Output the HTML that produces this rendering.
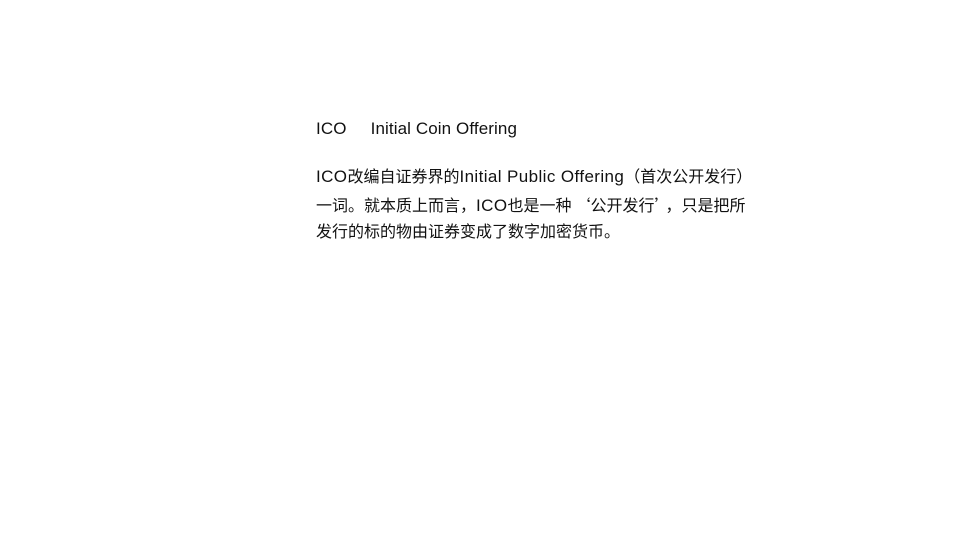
<!DOCTYPE html>
<html><head><meta charset="utf-8"><style>
html,body{margin:0;padding:0;background:#fff;width:960px;height:540px;overflow:hidden}
.l{position:absolute;left:316px;font-family:"Liberation Sans","Noto Sans CJK SC",sans-serif;font-size:16px;color:#111;white-space:nowrap;line-height:20px}
.e{font-family:"Liberation Sans",sans-serif;font-size:17px;letter-spacing:0.4px}
.t{font-size:17px;letter-spacing:0.1px}
.cj{font-family:"Noto Sans CJK SC",sans-serif}
</style></head><body>
<div class="l" style="top:119px"><span class="t">ICO&nbsp;&nbsp;&nbsp;&nbsp;&nbsp;Initial Coin Offering</span></div>
<div class="l" style="top:167px"><span class="e">ICO</span>改编自证券界的<span class="e">Initial Public Offering</span>（首次公开发行）</div>
<div class="l cj" style="top:194px">一词。就本质上而言，<span class="e">ICO</span>也是一种<span style="margin-left:3px">‘</span>公开发行’<span style="margin-left:3px">，</span>只是把所</div>
<div class="l" style="top:223px">发行的标的物由证券变成了数字加密货币。</div>
</body></html>
